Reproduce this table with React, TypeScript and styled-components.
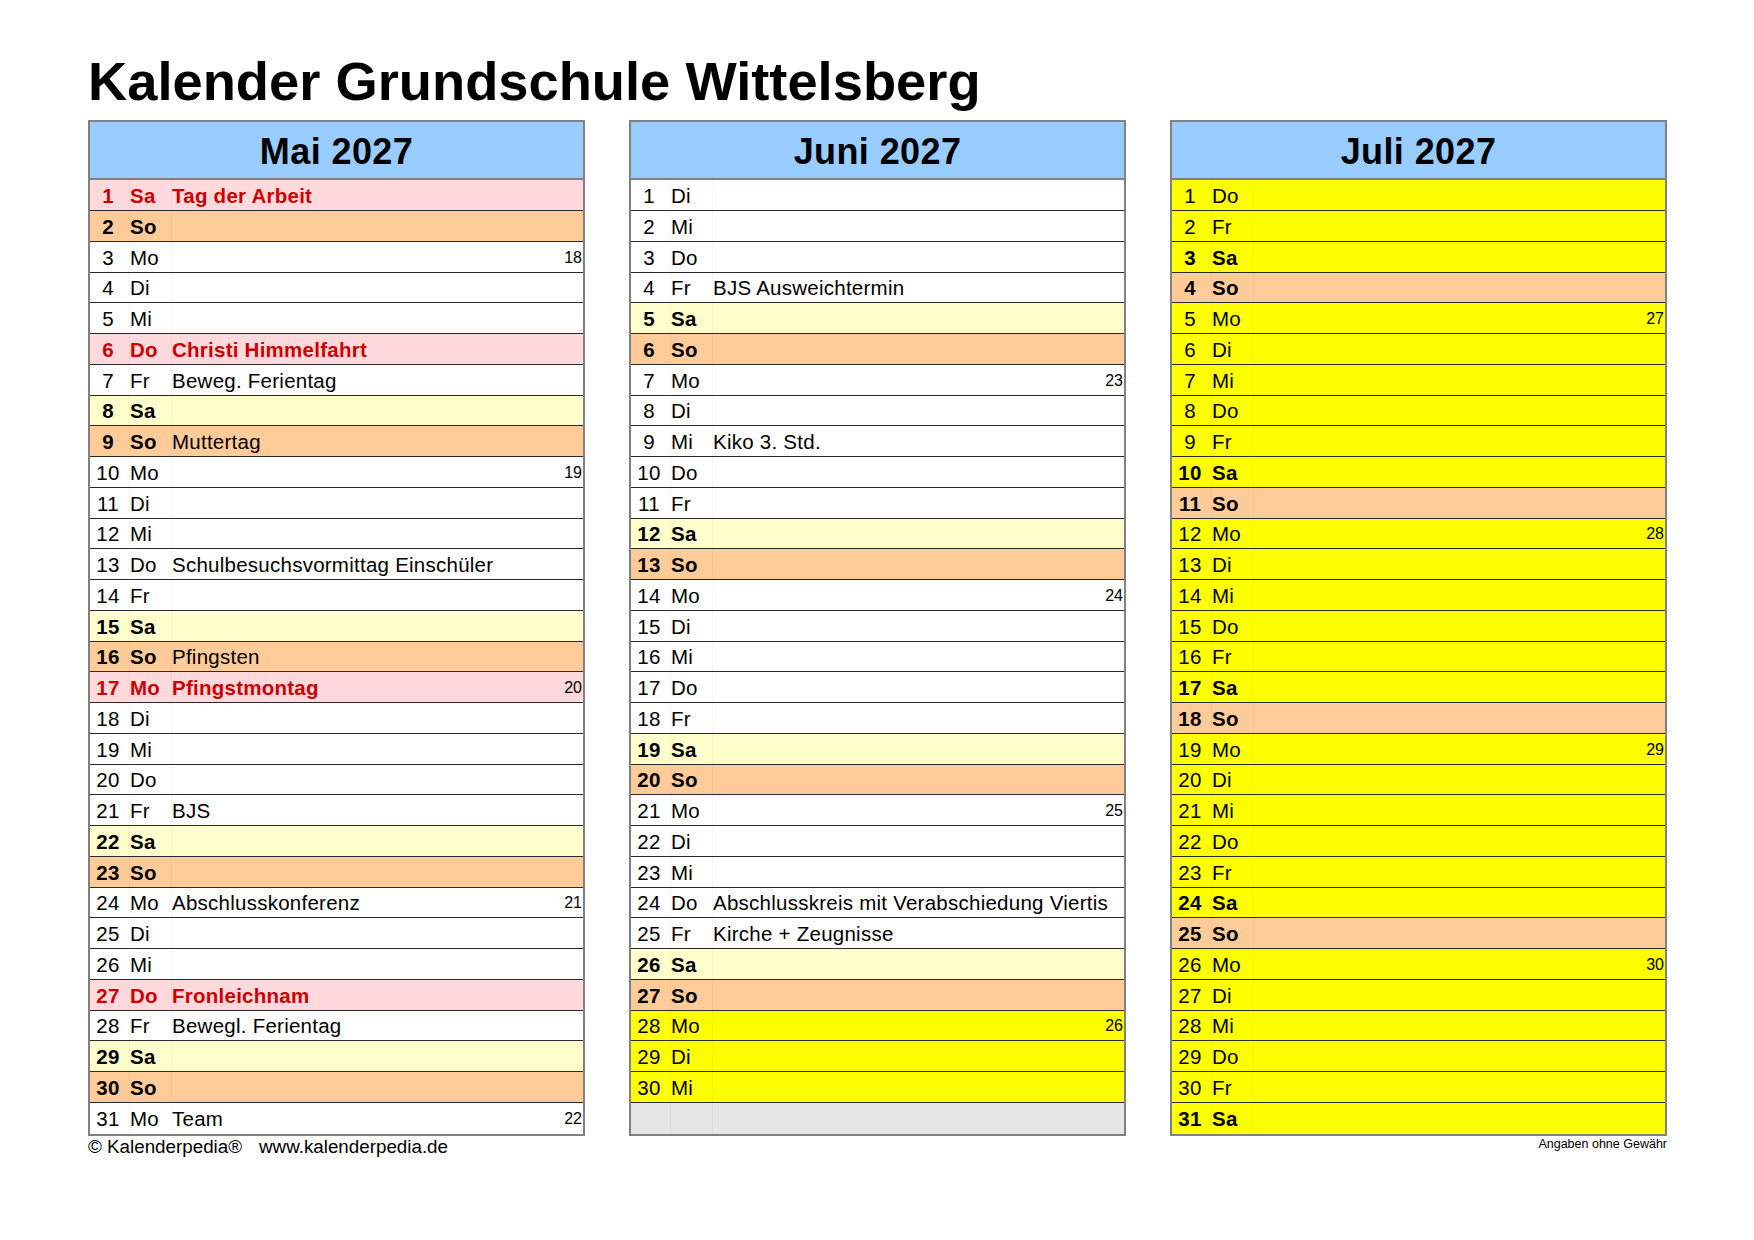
import styled, { createGlobalStyle, css } from 'styled-components';

type Kind = 'work' | 'sat' | 'sun' | 'holiday' | 'ferien' | 'ferienSat' | 'empty';

interface DayRow {
  day?: number;
  name?: string;
  event?: string;
  week?: number;
  kind: Kind;
}

interface MonthDef {
  title: string;
  month: number;
  holidays: number[];
  ferien: number[];
  events: Record<number, string>;
}

const DAY_NAMES = ['So', 'Mo', 'Di', 'Mi', 'Do', 'Fr', 'Sa'];

const range = (a: number, b: number) =>
  Array.from({ length: b - a + 1 }, (_, i) => a + i);

const MONTHS: MonthDef[] = [
  {
    title: 'Mai 2027',
    month: 4,
    holidays: [1, 6, 17, 27],
    ferien: [],
    events: {
      1: 'Tag der Arbeit',
      6: 'Christi Himmelfahrt',
      7: 'Beweg. Ferientag',
      9: 'Muttertag',
      13: 'Schulbesuchsvormittag Einschüler',
      16: 'Pfingsten',
      17: 'Pfingstmontag',
      21: 'BJS',
      24: 'Abschlusskonferenz',
      27: 'Fronleichnam',
      28: 'Bewegl. Ferientag',
      31: 'Team',
    },
  },
  {
    title: 'Juni 2027',
    month: 5,
    holidays: [],
    ferien: [28, 29, 30],
    events: {
      4: 'BJS Ausweichtermin',
      9: 'Kiko 3. Std.',
      24: 'Abschlusskreis mit Verabschiedung Viertis',
      25: 'Kirche + Zeugnisse',
    },
  },
  {
    title: 'Juli 2027',
    month: 6,
    holidays: [],
    ferien: range(1, 31),
    events: {},
  },
];

function isoWeek(date: Date) {
  const d = new Date(Date.UTC(date.getFullYear(), date.getMonth(), date.getDate()));
  const dayNum = d.getUTCDay() || 7;
  d.setUTCDate(d.getUTCDate() + 4 - dayNum);
  const yearStart = new Date(Date.UTC(d.getUTCFullYear(), 0, 1));
  return Math.ceil(((d.getTime() - yearStart.getTime()) / 86400000 + 1) / 7);
}

function buildRows(m: MonthDef): DayRow[] {
  const days = new Date(2027, m.month + 1, 0).getDate();
  return range(1, 31).map((day) => {
    if (day > days) return { kind: 'empty' };
    const date = new Date(2027, m.month, day);
    const wd = date.getDay();
    let kind: Kind = 'work';
    if (m.holidays.includes(day)) kind = 'holiday';
    else if (wd === 0) kind = 'sun';
    else if (m.ferien.includes(day)) kind = wd === 6 ? 'ferienSat' : 'ferien';
    else if (wd === 6) kind = 'sat';
    return {
      day,
      name: DAY_NAMES[wd],
      event: m.events[day],
      week: wd === 1 ? isoWeek(date) : undefined,
      kind,
    };
  });
}

const BG: Record<Kind, string> = {
  work: '#ffffff',
  sat: '#ffffcc',
  sun: '#ffcc99',
  holiday: '#ffd9dc',
  ferien: '#ffff00',
  ferienSat: '#ffff00',
  empty: '#e6e6e6',
};

const BOLD_KINDS: Kind[] = ['sat', 'sun', 'holiday', 'ferienSat'];

const GlobalStyle = createGlobalStyle`
  html, body {
    margin: 0;
    padding: 0;
    background: #ffffff;
  }
  body {
    font-family: "Liberation Sans", Arial, sans-serif;
    color: #000;
  }
`;

const Page = styled.div`
  width: 1754px;
  height: 1240px;
  box-sizing: border-box;
  padding: 55px 0 0 88px;
  overflow: hidden;
`;

const Title = styled.h1`
  margin: 0 0 11px;
  font-size: 54.3px;
  line-height: 1;
  font-weight: 700;
`;

const Months = styled.div`
  display: flex;
  gap: 44px;
  width: 1579px;
`;

const Month = styled.div`
  width: 497px;
  box-sizing: border-box;
  border: 2px solid #808080;
`;

const MonthHeader = styled.div`
  height: 58px;
  box-sizing: border-box;
  padding-top: 3px;
  background: #99ccff;
  border-bottom: 2px solid #808080;
  display: flex;
  align-items: center;
  justify-content: center;
  font-size: 36px;
  letter-spacing: 0.4px;
  font-weight: 700;
`;

const Row = styled.div<{ $kind: Kind }>`
  display: grid;
  grid-template-columns: 39px 42px 1fr auto;
  height: 30.75px;
  box-sizing: border-box;
  border-bottom: 1px solid #2a2a2a;
  background: ${(p) => BG[p.$kind]};
  font-size: 20.5px;
  letter-spacing: 0.25px;
  color: ${(p) => (p.$kind === 'holiday' ? '#cc0000' : '#000')};

  &:last-child {
    border-bottom: none;
  }
`;

const Cell = styled.div<{ $bold?: boolean; $grid?: boolean }>`
  display: flex;
  align-items: center;
  padding-top: 2px;
  white-space: nowrap;
  overflow: hidden;
  font-weight: ${(p) => (p.$bold ? 700 : 400)};
  ${(p) =>
    p.$grid &&
    css`
      border-left: 1px solid rgba(0, 0, 0, 0.04);
    `}
`;

const DayNum = styled(Cell)`
  justify-content: center;
  padding-right: 3px;
`;

const Week = styled.div`
  display: flex;
  align-items: center;
  padding: 2px 1px 0 0;
  font-size: 16px;
  letter-spacing: 0;
  color: #000;
`;

const Footer = styled.div`
  display: flex;
  justify-content: space-between;
  align-items: flex-start;
  width: 1579px;
`;

const Copyright = styled.div`
  display: flex;
  gap: 17px;
  margin-top: 2px;
  font-size: 18.8px;
  line-height: 1;
`;

const Disclaimer = styled.div`
  margin-top: 2px;
  font-size: 12.5px;
  line-height: 1;
`;

function MonthTable({ def }: { def: MonthDef }) {
  const rows = buildRows(def);
  return (
    <Month>
      <MonthHeader>{def.title}</MonthHeader>
      {rows.map((r, i) => {
        const bold = BOLD_KINDS.includes(r.kind);
        return (
          <Row key={i} $kind={r.kind}>
            <DayNum $bold={bold}>{r.day}</DayNum>
            <Cell $bold={bold} $grid>
              {r.name}
            </Cell>
            <Cell $bold={r.kind === 'holiday'} $grid>
              {r.event}
            </Cell>
            <Week>{r.week}</Week>
          </Row>
        );
      })}
    </Month>
  );
}

export default function App() {
  return (
    <>
      <GlobalStyle />
      <Page>
        <Title>Kalender Grundschule Wittelsberg</Title>
        <Months>
          {MONTHS.map((m) => (
            <MonthTable key={m.title} def={m} />
          ))}
        </Months>
        <Footer>
          <Copyright>
            <span>© Kalenderpedia®</span>
            <span>www.kalenderpedia.de</span>
          </Copyright>
          <Disclaimer>Angaben ohne Gewähr</Disclaimer>
        </Footer>
      </Page>
    </>
  );
}
